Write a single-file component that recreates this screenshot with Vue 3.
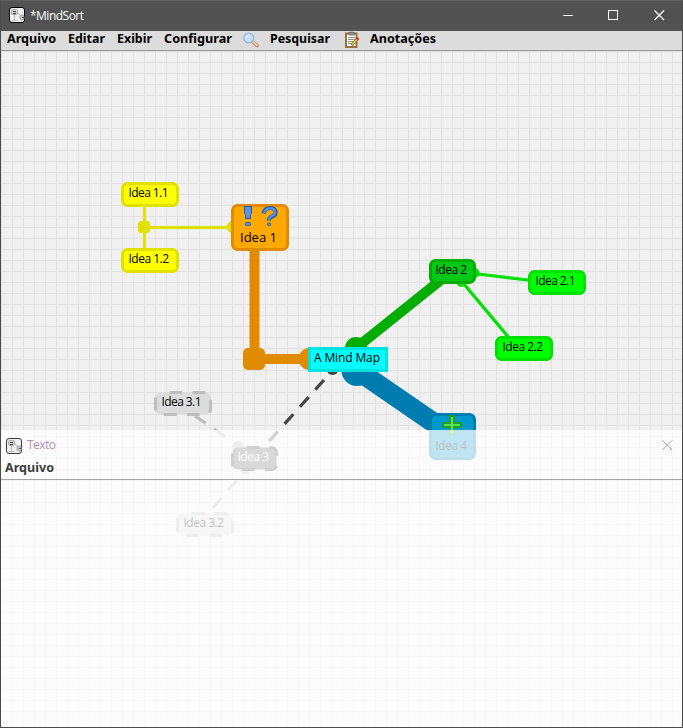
<script setup>
const menu = [
  { text: 'Arquivo', w: 49, gap: 12 },
  { text: 'Editar', w: 37, gap: 12 },
  { text: 'Exibir', w: 35, gap: 12 },
  { text: 'Configurar', w: 68, gap: 10 },
  { icon: 'search', w: 18, gap: 10 },
  { text: 'Pesquisar', w: 60, gap: 14 },
  { icon: 'notes', w: 18, gap: 8 },
  { text: 'Anotações', w: 66, gap: 0 },
]

const nodes = [
  { text: 'Idea 1.1', x: 121, y: 182, w: 58, h: 25, tx: 128.5, ty: 197, tw: 40, kind: 'yellow' },
  { text: 'Idea 1.2', x: 121, y: 248, w: 58, h: 25, tx: 128.5, ty: 263, tw: 40.5, kind: 'yellow' },
  { text: 'Idea 1', x: 231, y: 204, w: 58, h: 47, tx: 240, ty: 242, tw: 37, kind: 'orange', large: true },
  { text: 'Idea 2', x: 429, y: 259, w: 47, h: 25, tx: 435.5, ty: 274, tw: 31.5, kind: 'green' },
  { text: 'Idea 2.1', x: 528, y: 270, w: 58, h: 25, tx: 535.5, ty: 285, tw: 40, kind: 'lime' },
  { text: 'Idea 2.2', x: 495, y: 336, w: 58, h: 25, tx: 502.5, ty: 351, tw: 40.5, kind: 'lime' },
  { text: 'Idea 4', x: 429, y: 413, w: 47, h: 47, tx: 435.5, ty: 450, tw: 31.5, kind: 'blue' },
  { text: 'Idea 3.1', x: 154, y: 391, w: 58, h: 25, tx: 161.5, ty: 406, tw: 40, kind: 'grey', dashed: true },
  { text: 'Idea 3', x: 231, y: 446, w: 47, h: 25, tx: 237.5, ty: 461, tw: 31.5, kind: 'dark', dashed: true },
  { text: 'Idea 3.2', x: 176, y: 512, w: 58, h: 25, tx: 183.5, ty: 527, tw: 40.5, kind: 'grey', dashed: true },
]
</script>

<template>
  <div class="window">
    <header class="titlebar">
      <svg class="app-icon" width="16" height="16" viewBox="0 0 16 16">
        <rect x=".5" y=".5" width="15" height="15" rx="2.5" fill="#f0f0f0" stroke="#000" />
        <path d="M5.5 6v7M3 13.500h5M8 5l4 4" stroke="#b8b8b8" fill="none" />
        <rect x="2.500" y="2.500" width="6" height="5" rx="1.500" fill="#ddd" stroke="#aaa" />
        <path d="M4 4.500h3M4 6.500h3" stroke="#333" />
        <rect x="11" y="8" width="4" height="5" rx="1.500" fill="#ccc" stroke="#999" />
        <path d="M13 10.500h2" stroke="#333" />
      </svg>
      <svg class="title" width="60" height="30"><text x="0" y="20" textLength="54">*MindSort</text></svg>
      <div class="controls">
        <svg width="11" height="11"><path d="M0 5.500h10" stroke="#fff" /></svg>
        <svg width="11" height="11"><rect x=".5" y=".5" width="9" height="9" fill="none" stroke="#fff" /></svg>
        <svg width="11" height="11"><path d="M.5.5l9.500 9.500M10 .5L.5 10" stroke="#fff" stroke-width="1.200" /></svg>
      </div>
    </header>

    <nav class="menubar">
      <div v-for="(m, i) in menu" :key="i" class="item" :style="{ width: m.w + 'px', marginRight: m.gap + 'px' }">
        <svg v-if="m.text" :width="m.w + 2" height="19">
          <text x="0" y="12" :textLength="m.w" lengthAdjust="spacingAndGlyphs">{{ m.text }}</text>
        </svg>
        <svg v-else-if="m.icon === 'search'" width="18" height="18" viewBox="0 0 18 18">
          <path d="M11 11l4 3.500" stroke="#b98a63" stroke-width="3.600" stroke-linecap="round" />
          <path d="M11.300 11l3.500 3.200" stroke="#f3cda5" stroke-width="2" stroke-linecap="round" />
          <circle cx="6.800" cy="7" r="4.900" fill="#c8e0ff" stroke="#8db4e6" stroke-width="1.200" />
          <path d="M4 7.300a3 3 0 0 1 3-3" fill="none" stroke="#e6f2ff" stroke-width="1.300" />
        </svg>
        <svg v-else width="18" height="18" viewBox="0 0 18 18">
          <rect x="2" y="2.500" width="10.500" height="13.500" fill="#fff" stroke="#96703f" stroke-width="2" />
          <rect x="4.500" y="1.300" width="6" height="2.700" rx="1" fill="#999" stroke="#555" stroke-width=".8" />
          <path d="M4 6.500h7M4 8.500h7M4 10.500h5M4 12.500h3" stroke="#7b9a85" />
          <path d="M7.500 14l6-6" stroke="#6e5312" stroke-width="2.600" />
          <path d="M8 13.500l5.500-5.500" stroke="#f6e04c" stroke-width="1.500" />
          <path d="M13 8.500l1.500-1.500" stroke="#d92c2c" stroke-width="2.600" />
        </svg>
      </div>
    </nav>

    <main class="canvas">
      <svg width="681" height="676" viewBox="1 51 681 676">
        <defs>
          <pattern id="grid" x="12" y="51" width="11" height="11" patternUnits="userSpaceOnUse">
            <path d="M0 .5h11M.5 0v11" stroke="#e2e2e2" fill="none" />
          </pattern>
        </defs>
        <rect x="1" y="51" width="681" height="676" fill="#f0f0f0" />
        <rect x="1" y="51" width="681" height="676" fill="url(#grid)" />

        <g stroke="#e1e100" fill="#e1e100">
          <path d="M144.500 195v66M144.500 227.500h88" stroke-width="3" fill="none" />
          <rect x="138" y="221" width="12" height="12" rx="3" stroke="none" />
          <circle cx="232.500" cy="227" r="6" stroke="none" />
        </g>
        <g stroke="#e18c00" fill="#e18c00">
          <path d="M254.500 240v119h55" stroke-width="10" fill="none" />
          <rect x="243" y="348" width="22" height="22" rx="5" stroke="none" />
          <circle cx="309.500" cy="359" r="11" stroke="none" />
        </g>
        <path d="M356 348L452 271" stroke="#00ad00" stroke-width="10" />
        <circle cx="356" cy="348" r="11" fill="#00ad00" />
        <path d="M357 370L453 436" stroke="#007cb0" stroke-width="20" />
        <circle cx="357" cy="370.500" r="15.500" fill="#007cb0" />
        <g stroke="#00e100" fill="#00e100" stroke-width="3.200">
          <path d="M474 273.500L540 281.500M461 280.500L510 339" />
          <circle cx="474.500" cy="273" r="5" stroke="none" />
          <circle cx="461.500" cy="282" r="5" stroke="none" />
        </g>
        <path class="link" d="M324 380L254 458" stroke="#464646" />
        <circle cx="332.500" cy="369" r="6" fill="#464646" />
        <path class="link" d="M195 416L232 441.500" stroke="#bebebe" />
        <path class="link" d="M236.500 480.500L212 509" stroke="#bebebe" />
        <circle cx="238" cy="447" r="6" fill="#bebebe" />
        <circle cx="245" cy="468.500" r="5.500" fill="#bebebe" />

        <g v-for="n in nodes" :key="n.text" :class="['node', n.kind, { dashed: n.dashed, large: n.large }]">
          <rect :x="n.x + 1.5" :y="n.y + 1.5" :width="n.w - 3" :height="n.h - 3" rx="5" />
          <text :x="n.tx" :y="n.ty" :textLength="n.tw">{{ n.text }}</text>
        </g>

        <g class="node cyan">
          <rect x="309.500" y="348.500" width="77" height="22" />
          <text x="314" y="362" textLength="66">A Mind Map</text>
        </g>

        <g fill="#5b93e0" stroke="#2059b8">
          <path d="M244.500 206.500h7v7l-1 1v4h-5v-4l-1-1z" />
          <rect x="245.500" y="222.500" width="5" height="3" rx="1" />
        </g>
        <path d="M263.500 213.500q1-5.500 7-5.500q5 0 5 4.500q0 3-3.500 4q-3 1-3 4" fill="none" stroke="#2059b8" stroke-width="4.200" />
        <path d="M264 213q1-4.700 6.500-4.700q4.500 0 4.500 4.200q0 2.500-3 3.500q-3 1-3 4" fill="none" stroke="#5b93e0" stroke-width="2.200" />
        <rect x="267.500" y="223" width="3" height="2.500" rx="1" fill="#5b93e0" stroke="#2059b8" />
        <path d="M450 416h4v7h7v4h-7v7h-4v-7h-7v-4h7z" fill="#4ee84e" stroke="#229b2b" stroke-width="1.800" />
      </svg>

      <section class="panel">
        <div class="panel-title">
          <svg width="16" height="16" viewBox="0 0 16 16">
            <rect x=".5" y=".5" width="15" height="15" rx="2.500" fill="#ececec" stroke="#000" />
            <path d="M5.500 6v7M3 13.500h5M8 5l4 4" stroke="#a8a8a8" fill="none" />
            <rect x="2.500" y="2.500" width="6" height="5" rx="1.500" fill="#ccc" stroke="#999" />
            <path d="M4 4.500h3M4 6.500h3" stroke="#111" />
            <rect x="11" y="8" width="4" height="5" rx="1.500" fill="#bbb" stroke="#888" />
            <path d="M13 10.500h2" stroke="#222" />
          </svg>
          <svg class="panel-name" width="40" height="30"><text x="0" y="19" textLength="29">Texto</text></svg>
          <svg class="panel-close" width="11" height="11"><path d="M.5.5l9.500 9.500M10 .5L.5 10" stroke="#888" /></svg>
        </div>
        <div class="panel-menu">
          <svg width="52" height="19"><text x="0" y="12" textLength="49" lengthAdjust="spacingAndGlyphs">Arquivo</text></svg>
        </div>
      </section>
    </main>
  </div>
</template>

<style>
body { margin: 0; }
</style>

<style scoped>
.window {
  box-sizing: border-box;
  width: 683px;
  height: 728px;
  border: 1px solid #4b4b4b;
  border-top-color: #606060;
  display: flex;
  flex-direction: column;
  overflow: hidden;
  font-family: "Noto Sans", "Open Sans", sans-serif;
}
svg { display: block; flex: none; }
.titlebar {
  height: 30px;
  background: #525252;
  display: flex;
  align-items: flex-start;
  padding-left: 8px;
}
.app-icon { margin-top: 6px; }
.title { margin-left: 5px; margin-top: -1px; fill: #fff; font-size: 12px; font-family: "Open Sans", sans-serif; }
.controls { margin-left: auto; padding: 9px 17px 0 0; display: flex; gap: 35px; }
.controls svg:first-child { margin-right: -1px; }
.menubar {
  height: 19px;
  background: #dcdcdc;
  border-bottom: 1px solid #969696;
  display: flex;
  padding-left: 6px;
  font-weight: 700;
  font-size: 11.5px;
}
.item { flex: none; }
.canvas { position: relative; height: 676px; }
.link { stroke-width: 3.200; stroke-dasharray: 13 10; fill: none; }
.node rect { stroke-width: 3; }
.node text { font-size: 12px; fill: #000; font-family: "Open Sans", sans-serif; }
.node.large text { font-size: 13px; }
.dashed rect { stroke-dasharray: 13 10; stroke-dashoffset: -9; }
.yellow rect { fill: #ffff00; stroke: #e1e100; }
.orange rect { fill: #ffa800; stroke: #e18c00; }
.green rect { fill: #00c814; stroke: #00ad00; }
.lime rect { fill: #00ff00; stroke: #00e100; }
.blue rect { fill: #0099cc; stroke: #007cb0; }
.grey rect { fill: #dcdcdc; stroke: #bebebe; }
.dark rect { fill: #696969; stroke: #464646; }
.node.dark text { fill: #fff; }
.cyan rect { fill: #00ffff; stroke: #00e1e1; }
.panel {
  position: absolute;
  left: 0;
  top: 379px;
  width: 681px;
  height: 297px;
  background: #fff;
  opacity: 0.75;
}
.panel-title { height: 30px; display: flex; align-items: flex-start; padding: 8px 9px 0 5px; box-sizing: border-box; }
.panel-name { margin: -8px 0 0 5px; fill: #9c72a8; font-size: 12px; font-family: "Open Sans", sans-serif; }
.panel-close { margin: 2px 0 0 auto; }
.panel-menu { height: 19px; border-bottom: 1px solid #8c8c8c; padding-left: 4px; font-size: 11.5px; font-weight: 700; }
</style>
